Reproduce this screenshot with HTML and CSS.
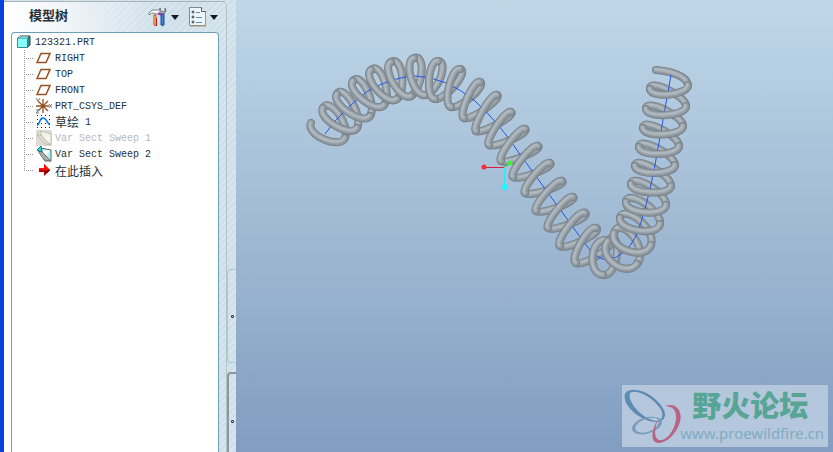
FILE: index.html
```html
<!DOCTYPE html>
<html lang="zh-CN">
<head>
<meta charset="utf-8">
<title>模型树</title>
<link rel="stylesheet" href="styles.css">
</head>
<body>
<aside class="sidebar">
  <section class="panel">
    <header class="panel-head">
      <h1 class="panel-title">模型树</h1>
      <button class="tool" aria-label="设置">
        <svg width="19" height="20" viewBox="0 0 19 20">
          <path d="M12 1l-1 3 2 3h3l2-3-1-3v3l-2 1-2-1z" fill="#b8b8b8" stroke="#777"/>
          <path d="M13 7h3v11q-1 1-3 0z" fill="#3f7fd0" stroke="#1c4a98"/>
          <path d="M1 6l3-3h8v4H8L4 6 1 8z" fill="#f0f6f8" stroke="#7d8a92"/>
          <path d="M6 8h2v10q-1 1-2 0z" fill="#ffe08a" stroke="#b05028"/>
          <path d="M8.500 11v8" stroke="#c02010"/>
          <path d="M10 6l3 2" stroke="#a030b0" stroke-width="2"/>
        </svg>
        <svg width="8" height="5" viewBox="0 0 8 5"><path d="M0 0h8L4 5z" fill="#111820"/></svg>
      </button>
      <button class="tool" aria-label="显示">
        <svg width="17" height="20" viewBox="0 0 17 20">
          <path d="M.5 .5h12l4 4v14H.5z" fill="#eef6fa" stroke="#7c8c96"/>
          <path d="M1 19h15.500V6" fill="none" stroke="#a89468"/>
          <path d="M12.500 .5v4h4" fill="#fff" stroke="#556"/>
          <g fill="#fff" stroke="#333"><circle cx="4" cy="5" r="1"/><circle cx="4" cy="10" r="1"/><circle cx="4" cy="15" r="1"/></g>
          <path d="M7 5.500h4M7 10.500h6M7 15.500h6" stroke="#5c8fae"/>
        </svg>
        <svg width="8" height="5" viewBox="0 0 8 5"><path d="M0 0h8L4 5z" fill="#111820"/></svg>
      </button>
    </header>
    <div class="tree">
      <div class="row root">
        <svg width="14" height="14" viewBox="0 0 14 14"><path d="M1 3l2-2h10v9l-3 3z" fill="#2b8f8f" stroke="#345"/><path d="M.5 3h10v9.500H.5z" fill="#8ff" stroke="#3a8c90"/><path d="M2 2h9" stroke="#dff"/></svg>
        <span>123321.PRT</span>
      </div>
      <ul class="branch">
        <li class="row"><svg width="16" height="16" viewBox="0 0 16 16"><path d="M5 3.500h9L10 12.500H1z" fill="none" stroke="#94501f" stroke-width="1.500"/></svg><span>RIGHT</span></li>
        <li class="row"><svg width="16" height="16" viewBox="0 0 16 16"><path d="M5 3.500h9L10 12.500H1z" fill="none" stroke="#94501f" stroke-width="1.500"/></svg><span>TOP</span></li>
        <li class="row"><svg width="16" height="16" viewBox="0 0 16 16"><path d="M5 3.500h9L10 12.500H1z" fill="none" stroke="#94501f" stroke-width="1.500"/></svg><span>FRONT</span></li>
        <li class="row"><svg width="16" height="16" viewBox="0 0 16 16"><path d="M7 1v14M0 8h13M2 3l10 10M12 3L2 13" stroke="#94501f" stroke-width="1.300"/><path d="M0 0l2 3 2-3M13 6l3 4M16 6l-3 4M0 12h3l-3 3h3" fill="none" stroke="#777"/></svg><span>PRT_CSYS_DEF</span></li>
        <li class="row"><svg width="16" height="16" viewBox="0 0 16 16"><path d="M1 1.500h14M1 5.500h14M1 9.500h14M1 13.500h14" stroke="#223" stroke-dasharray="1 3"/><path d="M1 11C4 11 3 4 7 4s4 6 7 7" fill="none" stroke="#0878e8" stroke-width="1.500"/></svg><span><b class="han">草绘</b> 1</span></li>
        <li class="row muted"><svg width="16" height="16" viewBox="0 0 16 16"><path d="M0 0h16v16H0z" fill="#dedbd6"/><path d="M2 4l3-3 10 3v11L2 5z" fill="#f4f4ef" stroke="#c4c2ac"/><path d="M1 5h4l9 10-5-1z" fill="#deddcf" stroke="#c0bea8"/><path d="M5 1v5" stroke="#bbb99f"/></svg><span>Var Sect Sweep 1</span></li>
        <li class="row"><svg width="16" height="16" viewBox="0 0 16 16"><path d="M5 2l10 2v11H9z" fill="#b6f3f5" stroke="#566"/><path d="M6 5l8-1-3 5z" fill="#fff"/><path d="M2 5l4 1 9 9-7-1z" fill="#aaa" stroke="#777"/><path d="M1 4l4-4 1 6z" fill="#39d5d9" stroke="#177980"/></svg><span>Var Sect Sweep 2</span></li>
        <li class="row"><svg width="16" height="16" viewBox="0 0 16 16"><path d="M3 6h5V2l6 6-6 6v-4H3z" fill="#b00000"/><path d="M3 6h5V2l6 6H3z" fill="#ff1010"/><path d="M9 12l5-4" stroke="#500"/></svg><span><b class="han">在此插入</b></span></li>
      </ul>
    </div>
  </section>
  <div class="rail">
    <button class="grip" aria-label="折叠"></button>
    <button class="grip lower" aria-label="展开"></button>
  </div>
</aside>
<main class="view">
  <svg class="scene" viewBox="236 0 597 452" preserveAspectRatio="xMinYMin meet" role="img" aria-label="Var Sect Sweep 2">
    <g id="back"></g>
    <path d="M325 134Q342 110 368 91Q392 77 415 76Q446 77 475 101Q500 124 519 153L586 245Q596 259 608 260Q626 256 636 236Q646 212 655 165L671 75" fill="none" stroke="#2056f0"/>
    <g id="front"></g>
    <path d="M484 167.500h20" stroke="#d82040"/><path d="M504 167l6-4" stroke="#20d020"/><path d="M504.500 168v19" stroke="#30e8f4"/>
    <circle cx="484" cy="167" r="2.500" fill="#f03038"/><circle cx="510" cy="163" r="2.500" fill="#40f040"/><circle cx="505" cy="187" r="3" fill="#20f4ff"/>
  </svg>
  <div class="brand">
    <svg class="brand-logo" width="60" height="62" viewBox="0 0 60 62">
      <path fill-rule="evenodd" fill="#5e8bb3" d="M4 7C14 0 34 10 42 25C45 32 41 37 34 37C18 37-3 18 4 7zM8 8C5 18 22 35 35 36C41 35 42 29 38 23C29 11 14 4 8 8z"/>
      <path fill-rule="evenodd" fill="#7c9aba" d="M33 32C22 30 10 37 10 44C12 52 28 51 38 42C42 36 40 33 33 32zM34 33C39 35 37 40 32 44C24 49 14 49 13 43C15 36 26 32 34 33z"/>
      <path fill-rule="evenodd" fill="#b86584" d="M43 21C53 17 61 25 58 37C54 51 41 61 33 57C28 53 31 42 36 34C32 45 32 53 37 55C44 57 53 45 54 34C55 25 50 21 43 21z"/>
    </svg>
    <div class="brand-text">
      <strong class="brand-name">野火论坛</strong>
      <span class="brand-url">www.proewildfire.cn</span>
    </div>
  </div>
</main>
<script src="coil.js"></script>
</body>
</html>
```
FILE: styles.css
```css
*, *::before { box-sizing: border-box; }
body {
  margin: 0;
  min-height: 100vh;
  display: flex;
  overflow: hidden;
  color: #263038;
  font: 10px/16px "Liberation Mono", "Noto Sans CJK SC", monospace;
}
button { border: 0; padding: 0; background: none; }
.sidebar {
  flex: 0 0 236px;
  display: flex;
  border-left: 4px solid #0a40dc;
  background: repeating-linear-gradient(135deg, #cfe0ea 0 3px, #d8e6ee 3px 5px);
}
.panel {
  flex: 1;
  display: flex;
  flex-direction: column;
  margin-top: 1px;
  padding: 0 7px;
  border-top: 1px solid #aab4b8;
  border-right: 1px solid #b4c2ca;
  border-top-right-radius: 5px;
  background: linear-gradient(90deg, #fff 0, #f4f7fa 50px, transparent 150px);
}
.panel-head {
  height: 30px;
  display: flex;
  align-items: center;
  gap: 10px;
  padding-right: 1px;
}
.panel-title {
  flex: 1;
  margin: 0;
  padding-left: 18px;
  font: bold 13px/24px "Noto Sans CJK SC", sans-serif;
  padding-bottom: 4px;
}
.tool {
  display: flex;
  align-items: center;
  gap: 4px;
}
.tree {
  flex: 1;
  padding: 1px 5px;
  border: 1px solid #6f9fb5;
  border-bottom: 0;
  border-radius: 4px 4px 0 0;
  background: #fff;
}
.row {
  height: 16px;
  display: flex;
  align-items: center;
  gap: 3px;
  white-space: nowrap;
}
.row span {
  display: flex;
  gap: 6px;
  padding-top: 2px;
}
.root { gap: 4px; }
.branch {
  margin: 0 0 0 7px;
  padding: 0;
  list-style: none;
  background: repeating-linear-gradient(#999 0 1px, transparent 1px 2px) 0 0 / 1px 120px no-repeat;
}
.branch .row::before {
  content: "";
  width: 9px;
  border-top: 1px dotted #999;
}
.muted { color: #b8b8b8; }
.row .han { font: 12px/14px "Noto Sans CJK SC", sans-serif; }
.rail {
  width: 9px;
  display: flex;
  flex-direction: column;
  gap: 9px;
  padding-top: 269px;
}
.grip {
  flex: 0 0 94px;
  display: flex;
  align-items: center;
  justify-content: center;
  border: 1px solid #a9cad8;
  border-right: 0;
  border-radius: 4px 0 0 4px;
}
.grip::before {
  content: "";
  width: 3px;
  height: 3px;
  border: 1px solid #203038;
  border-radius: 1px;
}
.lower {
  flex: 1 0 80px;
  padding-top: 16px;
  border: 2px solid #8899a6;
  border-width: 2px 0 0 2px;
  border-radius: 4px 0 0 0;
}
.view {
  flex: 1;
  position: relative;
  min-width: 0;
  background: linear-gradient(#c0d7e8, #819dc0);
}
.scene { display: block; width: 100%; }
.brand {
  position: absolute;
  right: 5px;
  bottom: 5px;
  display: flex;
  background: #b4c7dd;
}
.brand-text {
  display: flex;
  flex-direction: column;
  padding: 0 4px 0 0;
  margin-left: -2px;
}
.brand-name {
  padding-left: 12px;
  color: #58a596;
  font: 900 29px/38px "Noto Sans CJK SC", sans-serif;
}
.brand-url {
  color: #7eadc0;
  font: 15px/20px "Noto Sans", sans-serif;
}
```
FILE: coil.js
```js
// One entry per turn: start x, y, end x, y, and how far the strand bows out.
const turns = [
  [311, 123, 345, 138, 13], [323, 108, 357, 128, 12], [337, 94, 370, 116, 12],
  [353, 81, 384, 105, 12], [371, 70, 397, 99, 12], [391, 62, 411, 96, 12],
  [414, 58, 426, 95, 12], [438, 61, 435, 99, 10], [460, 69, 451, 107, 9],
  [480, 82, 464, 118, 7], [497, 95, 476, 131, 6], [511, 112, 489, 145, 6],
  [525, 129, 501, 161, 6], [538, 146, 513, 177, 6], [550, 163, 525, 193, 6],
  [562, 181, 536, 211, 6], [573, 197, 548, 228, 6], [585, 213, 560, 246, 7],
  [596, 228, 576, 263, 8], [606, 240, 603, 275, 16], [608, 241, 637, 264, 19],
  [614, 233, 651, 245, 17], [620, 218, 660, 224, 13], [626, 202, 666, 205, 12],
  [631, 184, 671, 186, 10], [635, 166, 675, 165, 10], [639, 147, 679, 146, 10],
  [643, 128, 683, 126, 10], [646, 109, 686, 106, 10], [650, 89, 688, 85, 10]
];

const layers = [
  [8, "#747d84", 0], [7, "#828b92", 0], [6, "#8f989f", -0.2],
  [4, "#9fa9af", -0.5], [2, "#afb9bf", -0.7]
];

function normal([x1, y1, x2, y2]) {
  const len = Math.hypot(x2 - x1, y2 - y1);
  return [-(y2 - y1) / len, (x2 - x1) / len];
}

function strand(groupId, d) {
  const group = document.getElementById(groupId);
  for (const [width, color, shift] of layers) {
    const path = document.createElementNS("http://www.w3.org/2000/svg", "path");
    path.setAttribute("d", d);
    path.setAttribute("fill", "none");
    path.setAttribute("stroke", color);
    path.setAttribute("stroke-width", width);
    path.setAttribute("stroke-linecap", "round");
    path.setAttribute("transform", `translate(${shift} ${shift})`);
    group.appendChild(path);
  }
}

turns.forEach((turn, i) => {
  const [x1, y1, x2, y2, bow] = turn;
  const [nx, ny] = normal(turn);
  const next = turns[i + 1];
  if (next) {
    const [mx, my] = normal(next);
    const a = bow * 1.1;
    const b = next[4] * 1.1;
    strand("back", `M${x2} ${y2}C${x2 - nx * a} ${y2 - ny * a} ${next[0] - mx * b} ${next[1] - my * b} ${next[0]} ${next[1]}`);
  } else {
    strand("back", `M${x2} ${y2}C687 76 670 71 656 70`);
  }
  strand("front", `M${x1} ${y1}C${x1 + nx * bow} ${y1 + ny * bow} ${x2 + nx * bow} ${y2 + ny * bow} ${x2} ${y2}`);
});
```
